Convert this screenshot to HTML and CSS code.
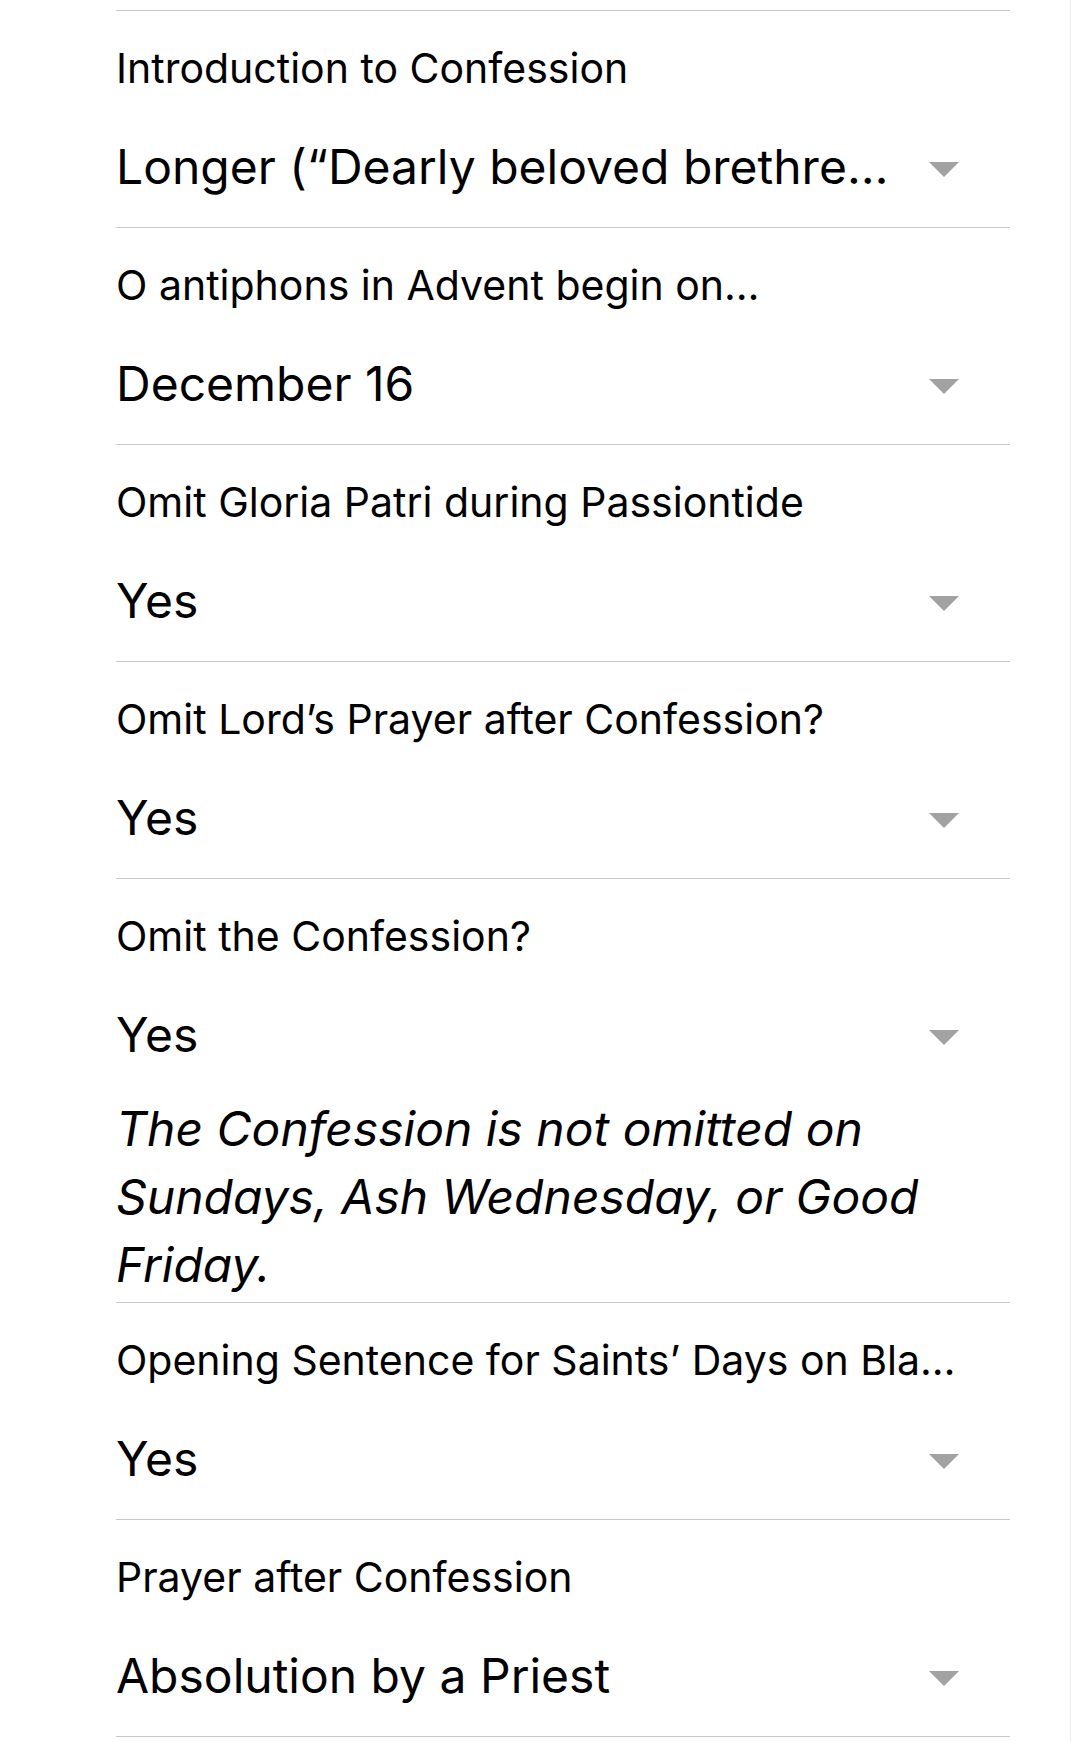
FILE: index.html
```html
<!DOCTYPE html>
<html lang="en">
<head>
<meta charset="utf-8">
<title>Settings</title>
<link rel="stylesheet" href="styles.css">
</head>
<body>
<div class="page">
  <div class="list">
    <div class="row">
      <div class="label">Introduction to Confession</div>
      <div class="select"><span class="value">Longer (“Dearly beloved brethre…</span><svg class="arrow" viewBox="0 0 30 15"><polygon points="0,0 30,0 15,15"/></svg></div>
    </div>
    <div class="row">
      <div class="label">O antiphons in Advent begin on…</div>
      <div class="select"><span class="value">December 16</span><svg class="arrow" viewBox="0 0 30 15"><polygon points="0,0 30,0 15,15"/></svg></div>
    </div>
    <div class="row">
      <div class="label">Omit Gloria Patri during Passiontide</div>
      <div class="select"><span class="value">Yes</span><svg class="arrow" viewBox="0 0 30 15"><polygon points="0,0 30,0 15,15"/></svg></div>
    </div>
    <div class="row">
      <div class="label">Omit Lord’s Prayer after Confession?</div>
      <div class="select"><span class="value">Yes</span><svg class="arrow" viewBox="0 0 30 15"><polygon points="0,0 30,0 15,15"/></svg></div>
    </div>
    <div class="row">
      <div class="label">Omit the Confession?</div>
      <div class="select"><span class="value">Yes</span><svg class="arrow" viewBox="0 0 30 15"><polygon points="0,0 30,0 15,15"/></svg></div>
      <p class="note">The Confession is not omitted on Sundays, Ash Wednesday, or Good Friday.</p>
    </div>
    <div class="row">
      <div class="label">Opening Sentence for Saints’ Days on Bla…</div>
      <div class="select"><span class="value">Yes</span><svg class="arrow" viewBox="0 0 30 15"><polygon points="0,0 30,0 15,15"/></svg></div>
    </div>
    <div class="row">
      <div class="label">Prayer after Confession</div>
      <div class="select"><span class="value">Absolution by a Priest</span><svg class="arrow" viewBox="0 0 30 15"><polygon points="0,0 30,0 15,15"/></svg></div>
    </div>
  </div>
</div>
</body>
</html>
```

FILE: styles.css
```css
html, body {
  margin: 0;
  padding: 0;
  background: #ffffff;
}

body {
  font-family: Inter, "Noto Sans", "Liberation Sans", sans-serif;
  color: #000000;
}

.page {
  box-sizing: border-box;
  width: 1071px;
  min-height: 1741px;
  padding: 10px 0 0 116px;
  border-right: 1px solid #ececec;
}

.list {
  width: 894px;
  border-top: 1px solid #c8c8c8;
}

.row {
  border-bottom: 1px solid #c8c8c8;
  padding-top: 27px;
}

.label {
  font-size: 41px;
  line-height: 60px;
  height: 60px;
  white-space: nowrap;
  overflow: hidden;
}

.select {
  display: flex;
  align-items: center;
  margin-top: 39px;
  margin-bottom: 30px;
  height: 60px;
  padding-right: 51px;
}

.value {
  flex: 1;
  font-size: 48px;
  line-height: 60px;
  white-space: nowrap;
  overflow: hidden;
}

.arrow {
  width: 30px;
  height: 15px;
  fill: #a2a2a2;
  margin-top: 5px;
}

.note {
  margin: 0 0 3px 0;
  font-size: 48px;
  font-style: italic;
  line-height: 68px;
  padding-right: 60px;
}
```
